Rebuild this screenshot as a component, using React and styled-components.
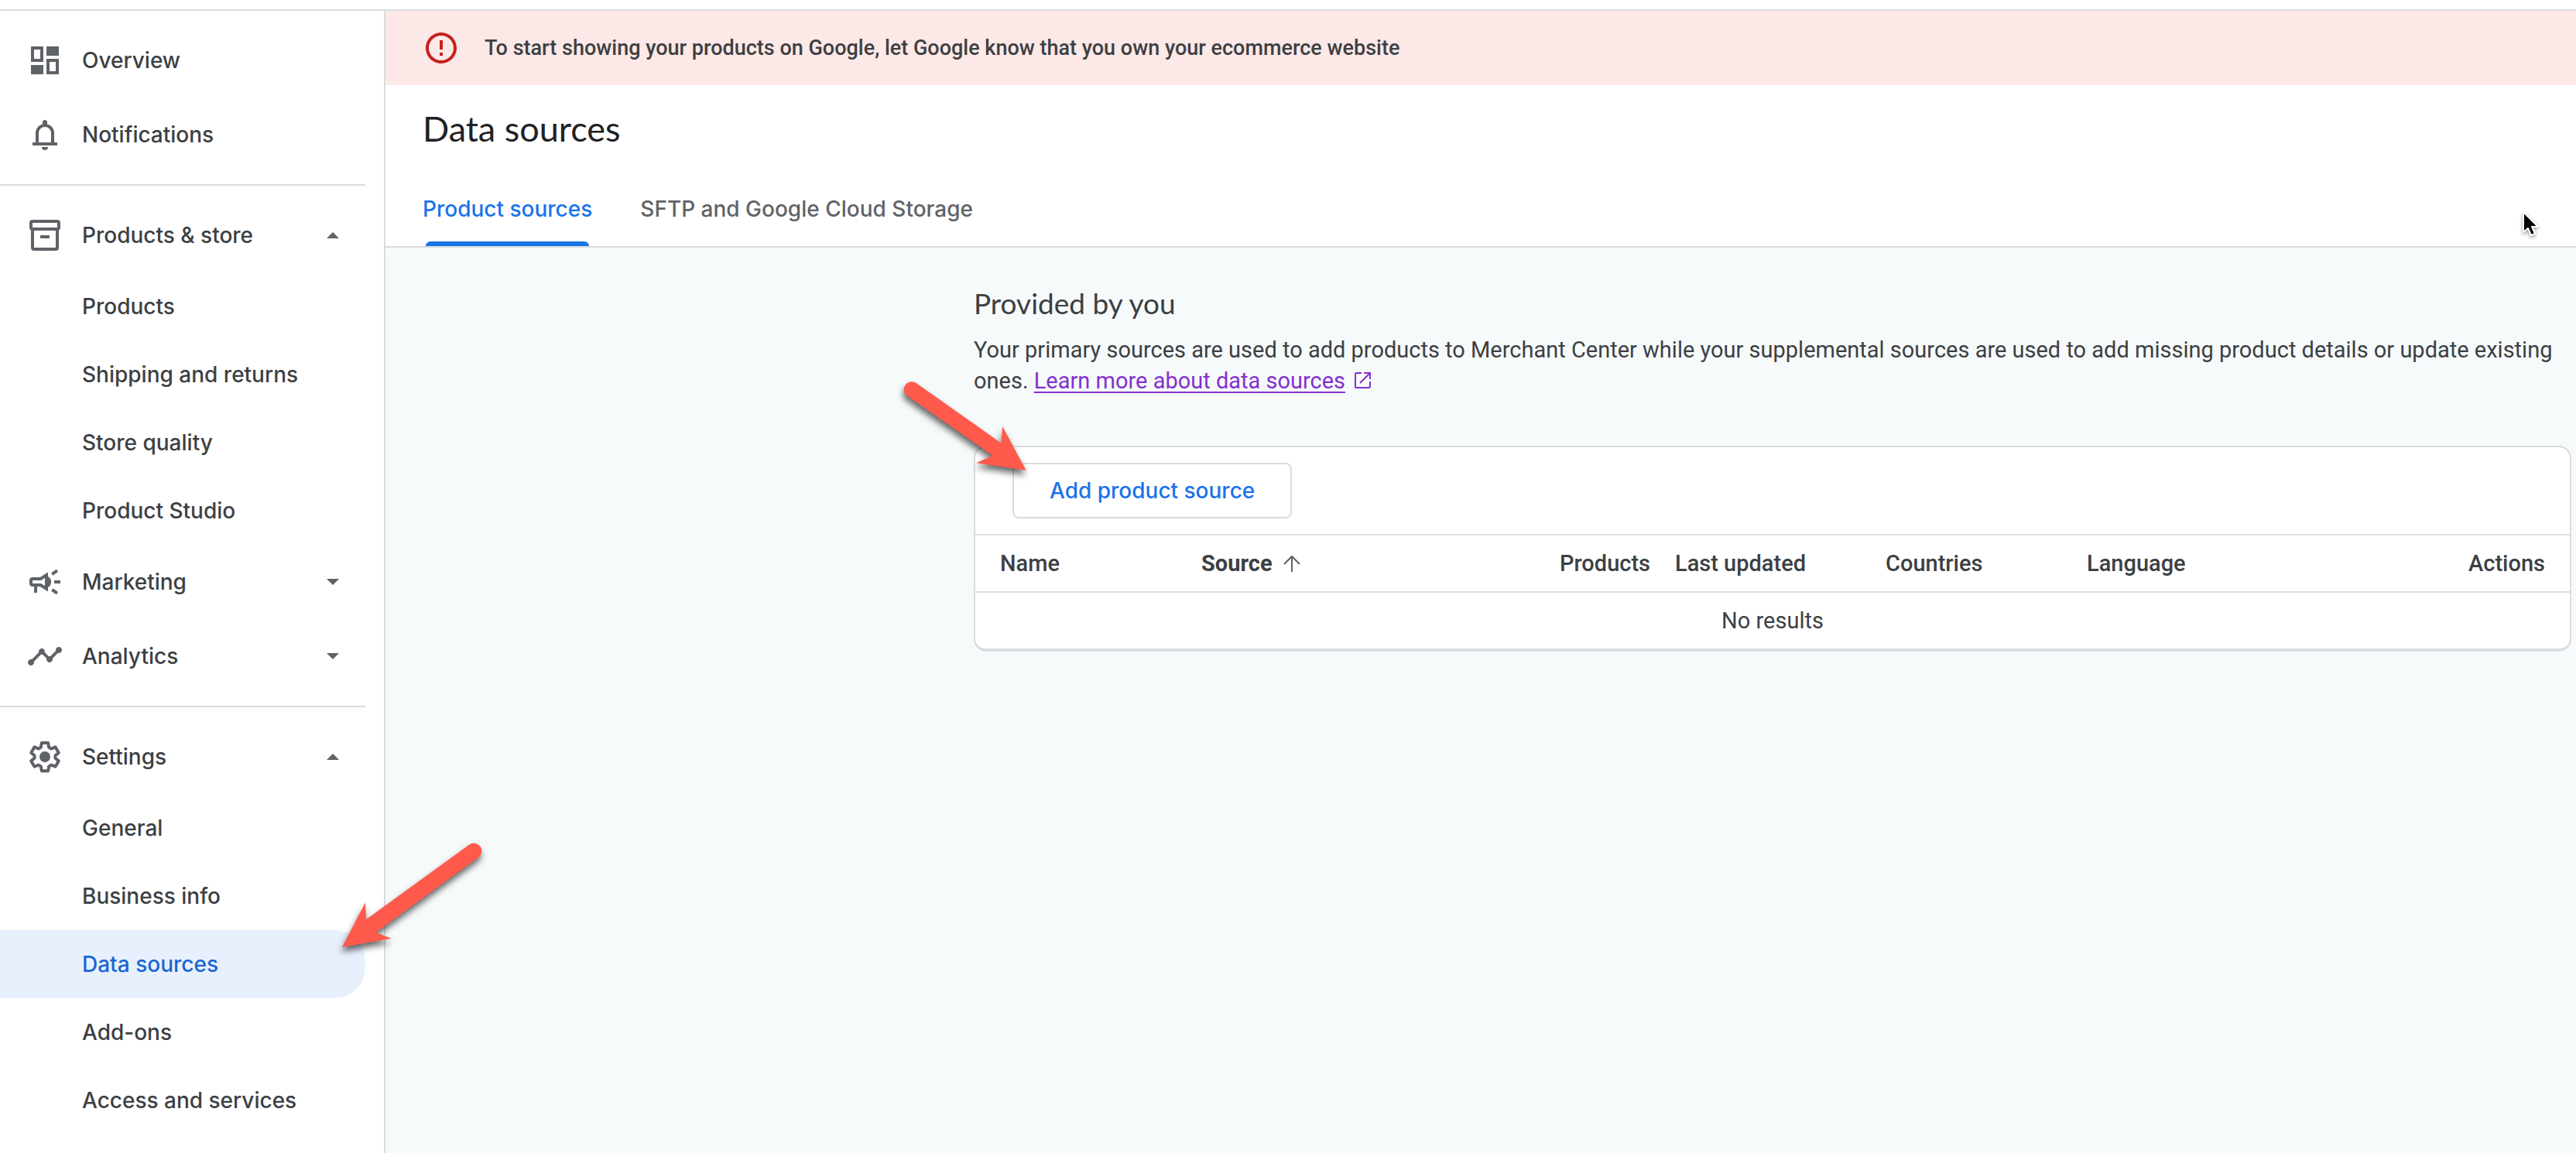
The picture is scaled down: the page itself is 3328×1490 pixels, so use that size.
import React, { useState } from "react"
import styled, { createGlobalStyle } from "styled-components"
import { MdErrorOutline, MdTimeline } from "react-icons/md"

const GlobalStyle = createGlobalStyle`
    *, *::before, *::after {
        box-sizing: border-box;
    }
    body {
        margin: 0;
        background: #fff;
        color: #3c4043;
        font-family: Roboto, Arial, sans-serif;
        font-size: 29px;
        line-height: 40px;
    }
    a {
        color: inherit;
        text-decoration: none;
    }
    button {
        font: inherit;
        color: inherit;
        background: none;
        border: none;
        padding: 0;
        cursor: pointer;
    }
`

const labelFont = `Inter, "Open Sans", sans-serif`
const titleFont = `Lato, "Open Sans", sans-serif`

const Page = styled.div`
    display: flex;
    flex-direction: column;
    min-height: 100vh;
`

const TopBar = styled.header`
    height: 14px;
    border-bottom: 2px solid #dadce0;
`

const Body = styled.div`
    display: flex;
    flex: 1;
`

const Sidebar = styled.nav`
    flex: none;
    width: 498px;
    padding: 16px 24px 24px 0;
    border-right: 2px solid #dadce0;
    font-family: ${labelFont};
    font-size: 28px;
    font-weight: 500;
`

const NavList = styled.ul`
    list-style: none;
    margin: 0;
    padding: 0;
`

const NavDivider = styled.hr`
    height: 2px;
    margin: 16px 0;
    border: none;
    background: #dadce0;
`

const NavItem = styled.li`
    position: relative;
`

const NavLink = styled.a`
    display: flex;
    align-items: center;
    gap: 24px;
    width: 100%;
    height: 96px;
    padding: 0 34px;
    text-align: left;
    svg {
        flex: none;
        color: #5f6368;
    }
`

const NavLabel = styled.span`
    flex: 1;
`

const SubLink = styled.a`
    display: flex;
    align-items: center;
    height: 88px;
    padding-left: 106px;
    border-radius: 0 40px 40px 0;
    color: ${props => (props.$active ? "#1967d2" : "inherit")};
    background: ${props => (props.$active ? "#e8f0fe" : "transparent")};
`

const Main = styled.main`
    flex: 1;
    min-width: 0;
    display: flex;
    flex-direction: column;
    background: #f6fafb;
`

const Banner = styled.div`
    display: flex;
    align-items: center;
    gap: 32px;
    height: 96px;
    padding: 0 48px;
    background: #fce8e6;
    font-size: 27px;
    font-weight: 500;
    svg {
        color: #c5221f;
    }
`

const PageHeader = styled.div`
    padding: 0 48px;
    background: #fff;
    border-bottom: 2px solid #dadce0;
`

const PageTitle = styled.h1`
    margin: 0;
    color: #202124;
    font-family: ${titleFont};
    font-size: 45px;
    font-weight: 400;
    line-height: 112px;
`

const Tabs = styled.div`
    display: flex;
    gap: 62px;
`

const Tab = styled.button`
    position: relative;
    height: 96px;
    color: ${props => (props.$active ? "#1a73e8" : "#5f6368")};
    font-family: ${labelFont};
    font-size: 28px;
    font-weight: 500;
    &::after {
        content: "";
        display: ${props => (props.$active ? "block" : "none")};
        position: absolute;
        left: 4px;
        right: 4px;
        bottom: 0;
        height: 6px;
        border-radius: 6px 6px 0 0;
        background: #1a73e8;
    }
`

const Content = styled.section`
    width: 100%;
    max-width: 2070px;
    margin-left: auto;
    padding: 48px 6px 48px 0;
`

const SectionTitle = styled.h2`
    margin: 0 0 16px;
    font-family: ${titleFont};
    font-size: 37px;
    font-weight: 400;
    line-height: 48px;
`

const Intro = styled.p`
    margin: 0 0 64px;
    svg {
        margin-left: 12px;
        color: #8430ce;
    }
`

const HelpLink = styled.a`
    color: #8430ce;
    text-decoration: underline;
    text-decoration-thickness: 2px;
    text-underline-offset: 4px;
`

const Card = styled.div`
    position: relative;
    background: #fff;
    border: 2px solid #dadce0;
    border-bottom-width: 4px;
    border-radius: 16px;
`

const Toolbar = styled.div`
    padding: 20px 48px;
    border-bottom: 2px solid #e0e0e0;
`

const OutlineButton = styled.button`
    display: block;
    height: 72px;
    padding: 0 46px;
    border: 2px solid #dadce0;
    border-radius: 8px;
    color: #1a73e8;
    font-family: ${labelFont};
    font-size: 28px;
    font-weight: 500;
`

const Table = styled.table`
    width: 100%;
    table-layout: fixed;
    border-collapse: separate;
    border-spacing: 0;
`

const HeadCell = styled.th`
    width: ${props => props.$width || "auto"};
    height: 74px;
    padding: 0 ${props => (props.$last ? "32px" : "0")} 0 32px;
    border-bottom: 2px solid #dadce0;
    text-align: ${props => props.$align || "left"};
    font-weight: ${props => (props.$sorted ? 700 : 500)};
`

const SortButton = styled.button`
    display: flex;
    align-items: center;
    gap: 14px;
    svg {
        color: #5f6368;
    }
`

const EmptyCell = styled.td`
    height: 72px;
    padding: 0;
    text-align: center;
`

const Pointer = styled.svg`
    position: absolute;
    z-index: 1;
    left: ${props => props.$left};
    top: ${props => props.$top};
    overflow: visible;
    pointer-events: none;
    filter: drop-shadow(-1px 6px 4px rgba(0, 0, 0, 0.6));
`

const Cursor = styled.svg`
    position: absolute;
    right: 48px;
    top: 272px;
    overflow: visible;
    pointer-events: none;
    filter: drop-shadow(0 2px 2px rgba(0, 0, 0, 0.4));
`

const DashboardIcon = () => (
    <svg width="48" height="48" viewBox="0 0 24 24" fill="none" stroke="currentColor" strokeWidth="2">
        <path d="M4 4h6v8H4zM14 12h6v8h-6z" />
        <path d="M13 3h8v6h-8zM3 15h8v6H3z" fill="currentColor" stroke="none" />
    </svg>
)

const BellIcon = () => (
    <svg width="48" height="48" viewBox="0 0 24 24" fill="none" stroke="currentColor" strokeWidth="2">
        <path d="M4 18h16" />
        <path d="M7 18v-7a5 5 0 0 1 10 0v7" />
        <path d="M10.5 5.6V4a1.5 1.5 0 0 1 3 0v1.6z" fill="currentColor" stroke="none" />
        <path d="M10 20h4a2 2 0 0 1-4 0z" fill="currentColor" stroke="none" />
    </svg>
)

const StoreIcon = () => (
    <svg width="48" height="48" viewBox="0 0 24 24" fill="none" stroke="currentColor" strokeWidth="2">
        <rect x="3" y="3" width="18" height="5" rx="1" />
        <path d="M4 8v12a1 1 0 0 0 1 1h14a1 1 0 0 0 1-1V8" />
        <path d="M9 13h6" />
    </svg>
)

const MegaphoneIcon = () => (
    <svg width="48" height="48" viewBox="0 0 24 24" fill="none" stroke="currentColor" strokeWidth="2">
        <path d="M3 11a1 1 0 0 1 1-1h5.2L13 7.6v8.8L9.2 14H4a1 1 0 0 1-1-1z" />
        <path d="M14 8.5a4 4 0 0 1 0 7z" fill="currentColor" stroke="none" />
        <path d="M6 14v5" />
        <path d="M18 12h4M16.600 7l3.400-2.300M16.600 17l3.400 2.300" />
    </svg>
)

const GearIcon = () => (
    <svg width="48" height="48" viewBox="0 0 24 24" fill="none" stroke="currentColor" strokeWidth="2" strokeLinejoin="round">
        <path d="M9.9 3h4.2l.5 2.9 1.5.9 2.7-1.100 2.100 3.700-2.200 1.800v1.700l2.200 1.800-2.100 3.600-2.700-1-1.500.9-.5 2.900H9.900l-.5-2.900-1.500-.9-2.700 1-2.100-3.600 2.200-1.800v-1.700L3.100 9.400l2.100-3.700 2.700 1.100 1.500-.9z" />
        <circle cx="12" cy="12" r="3.5" fill="currentColor" stroke="none" />
    </svg>
)

const Caret = ({ open }) => (
    <svg width="16" height="8" viewBox="0 0 16 8" fill="currentColor">
        <path d={open ? "M0 8l8-8 8 8z" : "M0 0l8 8 8-8z"} />
    </svg>
)

const SortArrow = () => (
    <svg width="22" height="22" viewBox="0 0 22 22" fill="none" stroke="currentColor" strokeWidth="2">
        <path d="M11 22V2M1 12L11 2l10 10" />
    </svg>
)

const ExternalIcon = () => (
    <svg width="21" height="21" viewBox="0 0 21 21" fill="none" stroke="currentColor" strokeWidth="2">
        <path d="M9 1H2.5A1.5 1.5 0 0 0 1 2.5v16A1.5 1.5 0 0 0 2.5 20h16a1.5 1.5 0 0 0 1.5-1.5V12" />
        <path d="M12 1h8v8M20 1L7 14" />
    </svg>
)

const primaryLinks = [
    { label: "Overview", icon: <DashboardIcon /> },
    { label: "Notifications", icon: <BellIcon /> },
]

const storeGroups = [
    {
        label: "Products & store",
        icon: <StoreIcon />,
        open: true,
        items: ["Products", "Shipping and returns", "Store quality", "Product Studio"],
    },
    { label: "Marketing", icon: <MegaphoneIcon />, items: [] },
    { label: "Analytics", icon: <MdTimeline size={48} />, items: [] },
]

const settingsGroup = {
    label: "Settings",
    icon: <GearIcon />,
    open: true,
    items: ["General", "Business info", "Data sources", "Add-ons", "Access and services"],
}

const tabs = ["Product sources", "SFTP and Google Cloud Storage"]

const columns = [
    { label: "Name", width: "260px" },
    { label: "Source", width: "352px", sorted: true },
    { label: "Products", width: "260px", align: "right" },
    { label: "Last updated", width: "272px" },
    { label: "Countries", width: "260px" },
    { label: "Language", width: "260px" },
    { label: "Actions", align: "right", last: true },
]

const NavGroup = ({ group }) => {
    const [open, setOpen] = useState(Boolean(group.open))

    return (
        <NavItem>
            <NavLink as="button" type="button" aria-expanded={open} onClick={() => setOpen(!open)}>
                {group.icon}
                <NavLabel>{group.label}</NavLabel>
                <Caret open={open} />
            </NavLink>
            {open && (
                <NavList>
                    {group.items.map(item => {
                        const active = item === "Data sources"
                        return (
                            <NavItem key={item}>
                                <SubLink href="#" $active={active} aria-current={active ? "page" : undefined}>
                                    {item}
                                </SubLink>
                                {active && (
                                    <Pointer $left="430px" $top="-122px" width="200" height="160" viewBox="0 0 600 480" aria-hidden="true">
                                        <path fill="#ff5a4b" d="M36 432L126 259L129 325L528 35A30 30 0 0 1 565 83L166 375L228 398Z" />
                                    </Pointer>
                                )}
                            </NavItem>
                        )
                    })}
                </NavList>
            )}
        </NavItem>
    )
}

const App = () => {
    const [tab, setTab] = useState(tabs[0])

    return (
        <Page>
            <GlobalStyle />
            <TopBar />
            <Body>
                <Sidebar aria-label="Main menu">
                    <NavList>
                        {primaryLinks.map(link => (
                            <NavItem key={link.label}>
                                <NavLink href="#">
                                    {link.icon}
                                    <NavLabel>{link.label}</NavLabel>
                                </NavLink>
                            </NavItem>
                        ))}
                    </NavList>
                    <NavDivider />
                    <NavList>
                        {storeGroups.map(group => <NavGroup key={group.label} group={group} />)}
                    </NavList>
                    <NavDivider />
                    <NavList>
                        <NavGroup group={settingsGroup} />
                    </NavList>
                </Sidebar>
                <Main>
                    <Banner role="alert">
                        <MdErrorOutline size={48} />
                        To start showing your products on Google, let Google know that you own your ecommerce website
                    </Banner>
                    <PageHeader>
                        <PageTitle>Data sources</PageTitle>
                        <Tabs role="tablist">
                            {tabs.map(name => (
                                <Tab key={name} type="button" role="tab" aria-selected={tab === name} $active={tab === name} onClick={() => setTab(name)}>
                                    {name}
                                </Tab>
                            ))}
                        </Tabs>
                    </PageHeader>
                    <Content>
                        <SectionTitle>Provided by you</SectionTitle>
                        <Intro>
                            Your primary sources are used to add products to Merchant Center while your supplemental sources are used to add missing product details or update existing ones.{" "}
                            <HelpLink href="#">Learn more about data sources</HelpLink>
                            <ExternalIcon />
                        </Intro>
                        <Card>
                            <Toolbar>
                                <OutlineButton type="button">Add product source</OutlineButton>
                            </Toolbar>
                            <Table>
                                <thead>
                                    <tr>
                                        {columns.map(col => (
                                            <HeadCell key={col.label} scope="col" $width={col.width} $align={col.align} $sorted={col.sorted} $last={col.last} aria-sort={col.sorted ? "ascending" : undefined}>
                                                {col.sorted ? (
                                                    <SortButton type="button">
                                                        {col.label}
                                                        <SortArrow />
                                                    </SortButton>
                                                ) : col.label}
                                            </HeadCell>
                                        ))}
                                    </tr>
                                </thead>
                                <tbody>
                                    <tr>
                                        <EmptyCell colSpan={columns.length}>No results</EmptyCell>
                                    </tr>
                                </tbody>
                            </Table>
                            <Pointer $left="-110px" $top="-98px" width="200" height="160" viewBox="0 0 600 480" aria-hidden="true">
                                <path fill="#ff5a4b" d="M527 383L435 212L431 278L102 46A30 30 0 0 0 65 94L398 326L334 355Z" />
                            </Pointer>
                        </Card>
                    </Content>
                </Main>
            </Body>
            <Cursor width="22" height="36" viewBox="0 0 22 36" aria-hidden="true">
                <path d="M2 2v26l6-5 4 9 5-2-4-9h8z" fill="#000" stroke="#fff" strokeWidth="2" strokeLinejoin="round" />
            </Cursor>
        </Page>
    )
}

export default App
